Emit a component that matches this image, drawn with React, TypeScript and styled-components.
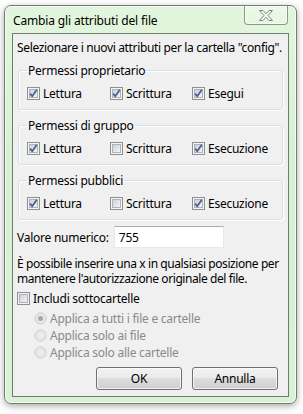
import React from "react";
import styled, { createGlobalStyle } from "styled-components";

const Global = createGlobalStyle`
  html, body { margin: 0; padding: 0; background: #ffffff; }
  body { font-family: "Noto Sans", "Open Sans", sans-serif; font-size: 12px; letter-spacing: -0.25px; color: #000; white-space: nowrap; }
`;

const Page = styled.div`
  width: 303px;
  height: 414px;
  padding: 5px 0 0 4px;
  box-sizing: border-box;
`;

const Frame = styled.div`
  width: 293px;
  height: 399px;
  box-sizing: border-box;
  border: 1px solid #6f7f6f;
  border-radius: 7px;
  background: linear-gradient(180deg, #e2f6dd 0%, #d7f0d1 40%, #daf2d4 100%);
  box-shadow: 0 2px 7px rgba(0, 0, 0, 0.35), inset 0 0 0 1px rgba(255, 255, 255, 0.75);
  padding: 0 7px 6px 7px;
  display: flex;
  flex-direction: column;
`;

const TitleBar = styled.div`
  height: 27px;
  display: flex;
  justify-content: space-between;
  align-items: flex-start;
`;

const Title = styled.div`
  padding-top: 7px;
  padding-left: 1px;
  line-height: 16px;
  letter-spacing: -0.15px;
  color: #000;
`;

const CloseButton = styled.div`
  width: 44px;
  height: 19px;
  margin-right: 1px;
  box-sizing: border-box;
  border: 1px solid #8a9a8a;
  border-top: none;
  border-radius: 0 0 4px 4px;
  background: linear-gradient(180deg, rgba(255,255,255,0.35), rgba(255,255,255,0.15));
  box-shadow: inset 0 0 0 1px rgba(255, 255, 255, 0.6);
  display: flex;
  align-items: center;
  justify-content: center;
`;

const Client = styled.div`
  flex: 1;
  border: 1px solid #6e7e6e;
  background: #f0f0f0;
  padding: 6px 5px 0 4px;
  display: flex;
  flex-direction: column;
`;

const Text = styled.div`
  line-height: 15px;
  letter-spacing: -0.35px;
`;

const Group = styled.fieldset`
  margin: 8px 0 0 1px;
  width: 265px;
  box-sizing: border-box;
  border: 1px solid #d5dfe5;
  border-radius: 3px;
  box-shadow: inset 1px 1px 0 #fff, 1px 1px 0 #fff;
  padding: 7px 0 8px 8px;
  min-width: 0;
`;

const Legend = styled.legend`
  padding: 0 1px;
  line-height: 15px;
  margin-left: 0;
`;

const Row = styled.div`
  display: grid;
  grid-template-columns: 83px 82px auto;
  align-items: center;
  height: 16px;
`;

const CheckLabel = styled.label<{ $disabled?: boolean }>`
  display: flex;
  align-items: center;
  gap: 3px;
  line-height: 15px;
  color: ${(p) => (p.$disabled ? "#8a8a8a" : "#000")};
`;

const ValueRow = styled.div`
  display: flex;
  align-items: center;
  margin-top: 6px;
  height: 22px;
  gap: 5px;
`;

const Input = styled.div`
  width: 110px;
  height: 22px;
  box-sizing: border-box;
  border: 1px solid #e3e9ef;
  border-top-color: #abadb3;
  background: #fff;
  padding-left: 4px;
  display: flex;
  align-items: center;
`;

const Para = styled.div`
  margin-top: 8px;
  line-height: 15px;
  letter-spacing: -0.42px;
`;

const IncludeRow = styled.div`
  margin-top: 4px;
  height: 16px;
  display: flex;
  align-items: center;
`;

const RadioList = styled.div`
  display: flex;
  flex-direction: column;
  padding-left: 17px;
  margin-top: 4px;
`;

const RadioRow = styled.div`
  height: 17px;
  display: flex;
  align-items: center;
`;

const Buttons = styled.div`
  display: flex;
  justify-content: flex-end;
  gap: 10px;
  margin-top: 6px;
  padding-right: 5px;
`;

const Button = styled.button`
  width: 86px;
  height: 23px;
  box-sizing: border-box;
  border: 1px solid #707070;
  border-radius: 3px;
  background: linear-gradient(180deg, #f2f2f2 0%, #ebebeb 45%, #dddddd 50%, #cfcfcf 100%);
  box-shadow: inset 0 0 0 1px rgba(255, 255, 255, 0.7);
  font-family: "Noto Sans", "Open Sans", sans-serif;
  font-size: 12px;
  letter-spacing: -0.25px;
  color: #000;
  padding: 0;
`;

const CheckBox: React.FC<{ checked?: boolean }> = ({ checked }) => (
  <svg width="13" height="13" viewBox="0 0 13 13" style={{ flex: "none" }}>
    <defs>
      <linearGradient id="cbg" x1="0" y1="0" x2="1" y2="1">
        <stop offset="0" stopColor="#cbcfd5" />
        <stop offset="1" stopColor="#f6f6f6" />
      </linearGradient>
    </defs>
    <rect x="0.5" y="0.5" width="12" height="12" fill="#f4f4f4" stroke="#8e8f8f" />
    <rect x="2.5" y="2.5" width="8" height="8" fill="url(#cbg)" stroke="#aeb3b9" strokeWidth="1" />
    {checked && (
      <path d="M3.2 6.6 L5.2 9.2 L9.8 2.8" fill="none" stroke="#4a5f97" strokeWidth="1.8" strokeLinejoin="round" />
    )}
  </svg>
);

const Radio: React.FC<{ checked?: boolean }> = ({ checked }) => (
  <svg width="13" height="13" viewBox="0 0 13 13" style={{ flex: "none" }}>
    <circle cx="6.5" cy="6.5" r="5.5" fill="#f4f4f4" stroke="#c7c7c7" />
    <circle cx="6.5" cy="6.5" r="4" fill="#ececec" stroke="#e0e0e0" />
    {checked && <circle cx="6.5" cy="6.5" r="2.5" fill="#a8a8a8" />}
  </svg>
);

const CloseGlyph = () => (
  <svg width="16" height="13" viewBox="0 0 16 13">
    <path
      d="M1.5 1.5 H5 L8 4.7 L11 1.5 H14.5 L10 6.5 L14.5 11.5 H11 L8 8.3 L5 11.5 H1.5 L6 6.5 Z"
      fill="#f4f6f4"
      stroke="#7b8a7b"
      strokeWidth="1"
      strokeLinejoin="round"
    />
  </svg>
);

const groups: { title: string; items: [string, boolean][] }[] = [
  { title: "Permessi proprietario", items: [["Lettura", true], ["Scrittura", true], ["Esegui", true]] },
  { title: "Permessi di gruppo", items: [["Lettura", true], ["Scrittura", false], ["Esecuzione", true]] },
  { title: "Permessi pubblici", items: [["Lettura", true], ["Scrittura", false], ["Esecuzione", true]] },
];

export default function App() {
  return (
    <Page>
      <Global />
      <Frame>
        <TitleBar>
          <Title>Cambia gli attributi del file</Title>
          <CloseButton>
            <CloseGlyph />
          </CloseButton>
        </TitleBar>
        <Client>
          <Text>Selezionare i nuovi attributi per la cartella "config".</Text>
          {groups.map((g) => (
            <Group key={g.title}>
              <Legend>{g.title}</Legend>
              <Row>
                {g.items.map(([label, checked]) => (
                  <CheckLabel key={label}>
                    <CheckBox checked={checked} />
                    {label}
                  </CheckLabel>
                ))}
              </Row>
            </Group>
          ))}
          <ValueRow>
            <span>Valore numerico:</span>
            <Input>755</Input>
          </ValueRow>
          <Para>
            È possibile inserire una x in qualsiasi posizione per
            <br />
            mantenere l'autorizzazione originale del file.
          </Para>
          <IncludeRow>
            <CheckLabel>
              <CheckBox />
              Includi sottocartelle
            </CheckLabel>
          </IncludeRow>
          <RadioList>
            <RadioRow>
              <CheckLabel $disabled>
                <Radio checked />
                Applica a tutti i file e cartelle
              </CheckLabel>
            </RadioRow>
            <RadioRow>
              <CheckLabel $disabled>
                <Radio />
                Applica solo ai file
              </CheckLabel>
            </RadioRow>
            <RadioRow>
              <CheckLabel $disabled>
                <Radio />
                Applica solo alle cartelle
              </CheckLabel>
            </RadioRow>
          </RadioList>
          <Buttons>
            <Button>OK</Button>
            <Button>Annulla</Button>
          </Buttons>
        </Client>
      </Frame>
    </Page>
  );
}
